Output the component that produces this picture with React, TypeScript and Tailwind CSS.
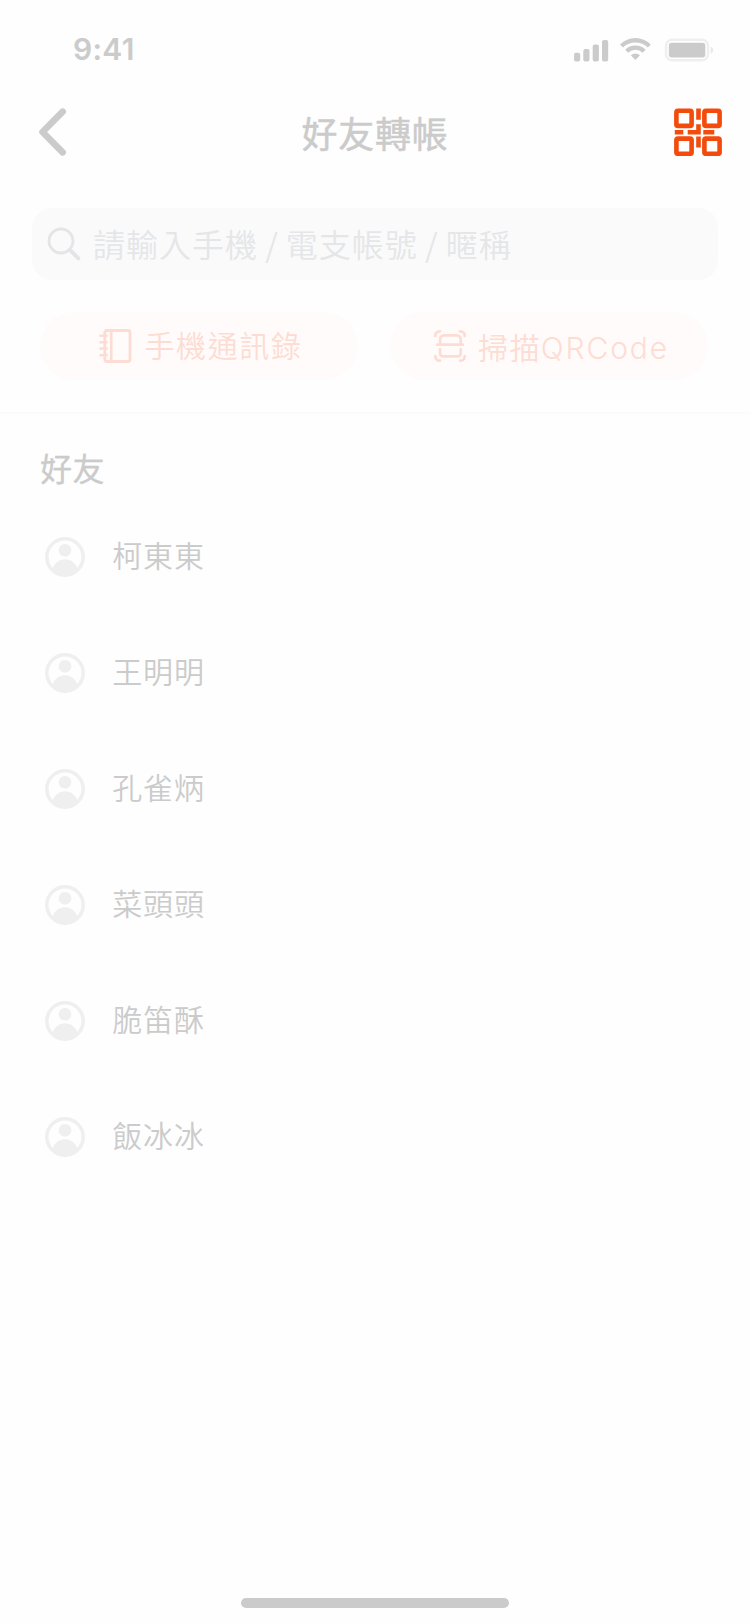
const friends = ["柯東東", "王明明", "孔雀炳", "菜頭頭", "脆笛酥", "飯冰冰"];

function StatusIcons() {
  return (
    <svg width="140" height="30" viewBox="0 0 140 30" fill="#cbcbcb">
      <rect x="0" y="17.700" width="6.200" height="8.800" rx="2" />
      <rect x="9.300" y="14" width="6.200" height="12.500" rx="2" />
      <rect x="18.700" y="9.500" width="6.200" height="17" rx="2" />
      <rect x="28" y="5" width="6.200" height="21.500" rx="2" />
      <path d="M46 9.400a22 22 0 0 1 30.800 0l-2.900 3.100a18 18 0 0 0-25 0z" />
      <path d="M51.200 14.800a14.500 14.500 0 0 1 20.400 0l-3 3a10.200 10.200 0 0 0-14.400 0z" />
      <path d="M56.800 20.300a6.800 6.800 0 0 1 9.200 0l-4.600 4.800z" />
      <rect x="92" y="4.800" width="42" height="20.500" rx="6" fill="none" stroke="#efefef" strokeWidth="2.400" />
      <rect x="94.800" y="7.800" width="36.500" height="14.600" rx="3" />
      <path d="M136.700 11.500q2.500 1.200 2.500 3.700t-2.500 3.700z" fill="#e9e9e9" />
    </svg>
  );
}

function QrIcon() {
  return (
    <svg width="48" height="48" viewBox="0 0 48 48" fill="none" stroke="#f24b0c" strokeWidth="4.600">
      <rect x="2.400" y="2.700" width="15.200" height="15.200" rx="1.500" />
      <rect x="30.400" y="2.700" width="15.200" height="15.200" rx="1.500" />
      <rect x="2.400" y="30.600" width="15.200" height="15.200" rx="1.500" />
      <rect x="30.400" y="30.600" width="15.200" height="15.200" rx="1.500" />
      <path d="M24.500 .5v11.200M24.500 28.500v11M.8 24.200h8.500M29.300 24.200h11M13.700 24.200h13M24.500 16.200v10.300" />
    </svg>
  );
}

function SearchIcon() {
  return (
    <svg width="34" height="34" viewBox="0 0 34 34" fill="none" stroke="#e4e5e7" strokeLinecap="round">
      <circle cx="14" cy="14" r="12" strokeWidth="2.800" />
      <path d="M23.500 23.500l7.800 7.800" strokeWidth="4" />
    </svg>
  );
}

function NotebookIcon() {
  return (
    <svg width="34" height="36" viewBox="0 0 34 36" fill="none" stroke="#fdddd3" strokeWidth="2.800" strokeLinecap="round">
      <rect x="6.800" y="2.500" width="25.200" height="31" rx="2" />
      <path d="M13.300 3v30" strokeWidth="2.600" />
      <path d="M2.400 7.700h6.200M2.400 14.300h6.200M2.400 20.500h6.200M2.400 27.200h6.200" strokeWidth="2.400" />
    </svg>
  );
}

function ScanIcon() {
  return (
    <svg width="34" height="34" viewBox="0 0 34 34" fill="none" stroke="#fdddd3" strokeWidth="2.700" strokeLinecap="round">
      <path d="M2.300 7V6.500a4.200 4.200 0 0 1 4.200-4.200h.5M27 2.300h.5a4.200 4.200 0 0 1 4.200 4.200v.5M2.300 27v.5a4.200 4.200 0 0 0 4.200 4.200h.5M27 31.700h.5a4.200 4.200 0 0 0 4.200-4.200v-.5" />
      <path d="M4.200 15.700h25.600" />
      <path d="M7.100 15V10.300a4 4 0 0 1 4-4h12.600a4 4 0 0 1 4 4V15M7.100 20.200v4.200a3 3 0 0 0 3 3h14.600a3 3 0 0 0 3-3v-4.200" />
    </svg>
  );
}

function Avatar() {
  return (
    <svg width="40" height="40" viewBox="0 0 40 40" fill="#efefef">
      <circle cx="20" cy="20" r="18.200" fill="none" stroke="#efefef" strokeWidth="3.500" />
      <circle cx="20" cy="13.300" r="6.300" />
      <path d="M7 33C9 26 14.500 22.300 20 22.300S31 26 33 33Q27 38.500 20 38.500T7 33z" />
    </svg>
  );
}

export default function App() {
  return (
    <div className="flex h-[1624px] w-[750px] flex-col bg-[#fefefe] font-['Noto_Sans_CJK_TC',sans-serif] text-[#cbcbcb]">
      <div className="flex h-[88px] items-start justify-between pl-[73px] pr-[36px] pt-[35px]">
        <span className="font-['Inter',sans-serif] text-[30px] leading-[29px] font-semibold tracking-[0.3px]">9:41</span>
        <StatusIcons />
      </div>

      <header className="grid h-[120px] grid-cols-[1fr_auto_1fr] items-start px-[37px]">
        <svg className="mt-[19px]" width="32" height="50" viewBox="0 0 32 50" fill="none" stroke="#cbcbcb" strokeWidth="6.600" strokeLinecap="round" strokeLinejoin="round">
          <path d="M25.700 4.700L5.500 25l20.200 20.300" />
        </svg>
        <h1 className="mt-[24px] text-[36px] leading-[40px] font-normal tracking-[0.8px] [-webkit-text-stroke:0.5px_#cbcbcb]">好友轉帳</h1>
        <div className="-mr-[9px] mt-[20px] flex justify-end">
          <QrIcon />
        </div>
      </header>

      <div className="mx-8 flex h-[72px] items-center rounded-[20px] bg-[#fafafb] pl-[15px] text-[#e5e6e8]">
        <SearchIcon />
        <span className="-mt-[3px] ml-[12px] font-['Noto_Sans_CJK_TC_DemiLight','Noto_Sans_CJK_TC',sans-serif] text-[32px] leading-[40px] font-[350] tracking-[1px] whitespace-pre [word-spacing:-1px]">請輸入手機 / 電支帳號 / 暱稱</span>
      </div>

      <div className="mt-8 flex h-[102px] gap-8 border-b-2 border-[#fbfbfb] px-10 font-['Noto_Sans_CJK_TC_DemiLight','Noto_Sans_CJK_TC',sans-serif] text-[30px] leading-[40px] font-[350] text-[#fdddd3]">
        <button className="flex h-[68px] w-[318px] items-center rounded-full bg-[#fffbfa] pl-[58px]">
          <NotebookIcon />
          <span className="-mt-[4px] ml-[12.500px] tracking-[1.600px]">手機通訊錄</span>
        </button>
        <button className="flex h-[68px] w-[318px] items-center rounded-full bg-[#fffbfa] pl-[43px]">
          <ScanIcon />
          <span className="ml-[11px] tracking-[1.400px]">掃描</span>
          <span className="mt-[3px] font-['Inter',sans-serif] text-[30px] font-light tracking-[1.900px]">QRCode</span>
        </button>
      </div>

      <h2 className="mt-[33px] ml-10 text-[32px] leading-[40px] font-normal tracking-[0.5px] [-webkit-text-stroke:0.3px_#cbcbcb]">好友</h2>

      <ul className="mt-[12px] flex flex-col">
        {friends.map((name) => (
          <li key={name} className="flex h-[116px] items-center pl-[44.500px]">
            <Avatar />
            <span className="-mt-[6px] ml-[27.800px] font-['Noto_Sans_CJK_TC_DemiLight','Noto_Sans_CJK_TC',sans-serif] text-[30px] leading-[40px] font-[350] tracking-[0.800px]">{name}</span>
          </li>
        ))}
      </ul>

      <div className="mt-auto mb-4 h-[10px] w-[268px] self-center rounded-full bg-[#cbcbcb]" />
    </div>
  );
}
